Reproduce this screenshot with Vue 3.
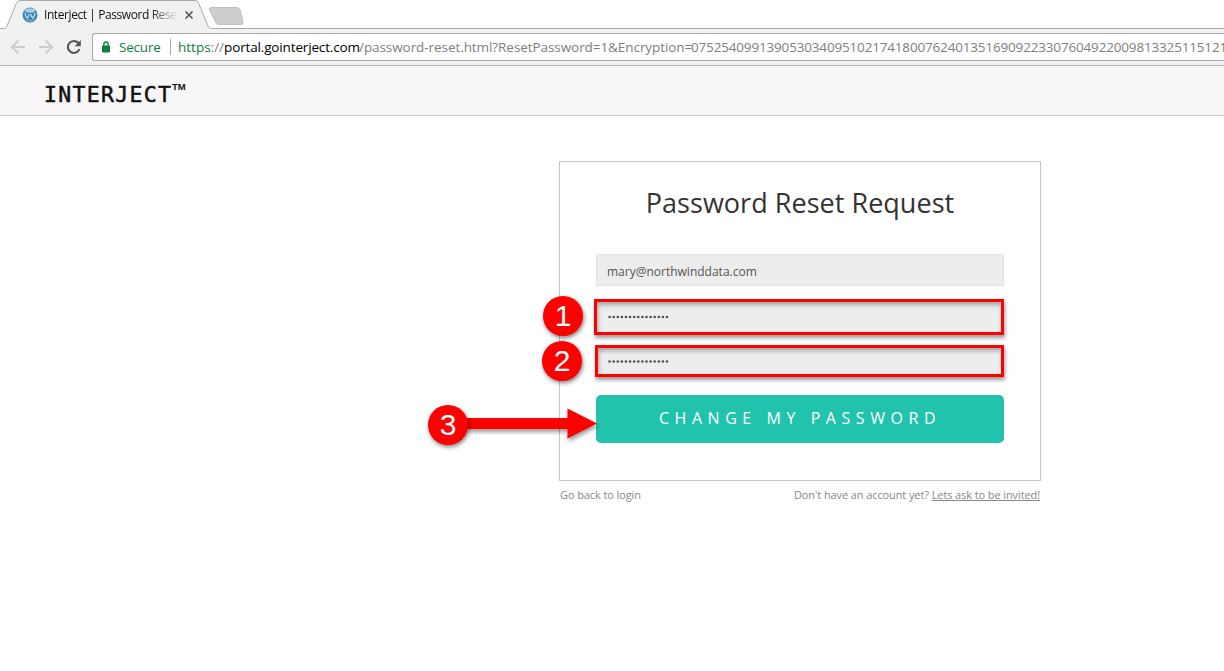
<script setup>
const dots = Array.from({ length: 15 }, (_, i) => i)
</script>

<template>
  <div class="page">
    <header class="browser">
      <svg class="tabs" width="1224" height="29" viewBox="0 0 1224 29">
        <rect width="1224" height="28" fill="#fff" />
        <path d="M0 28.5H4Q6 28.5 7 26L16.500 3Q17.500 .500 20 .500H195Q197.500 .500 198.500 3L208 26Q209 28.500 211.500 28.500H1224" fill="#f2f1f2" stroke="#aaa" />
        <path d="M211 7.500H237Q239 7.500 240 9.500L243 22Q243.500 24.500 241 24.500H219Q216.500 24.500 215.500 22L209.500 10Q208.500 7.500 211 7.500Z" fill="#cdcdcd" stroke="#c0c0c0" />
        <circle cx="30" cy="15" r="7.500" fill="#3b85b8" />
        <ellipse cx="30" cy="10.500" rx="5" ry="2.300" fill="#a7cce4" />
        <path d="M25 13Q25.300 16.500 27.200 18Q28.700 17 29.300 14M30.700 14Q31.300 17 32.800 18Q34.700 16.500 35 13" fill="none" stroke="#d5eaf7" stroke-width="1.200" />
        <path d="M25.500 19.500Q30 22 34.500 19.500" fill="none" stroke="#85b5d5" />
        <path d="M185.500 11.500L192.500 18.500M192.500 11.500L185.500 18.500" stroke="#555" stroke-width="1.700" />
      </svg>
      <span class="tab-title">Interject | Password Rese</span>
      <div class="toolbar">
        <svg class="nav" width="92" height="36" viewBox="0 29 92 36">
          <g fill="none" stroke="#cbcbcb" stroke-width="1.800">
            <path d="M25 47H12.500M18.500 40.500L12 47L18.500 53.500" />
            <path d="M39 47H51.500M45.500 40.500L52 47L45.500 53.500" />
          </g>
          <path d="M78.400 43A6 6 0 1 0 79.500 49" fill="none" stroke="#555" stroke-width="2.100" />
          <path d="M80.800 40V46.200H74.600Z" fill="#555" />
        </svg>
        <div class="address">
          <svg class="lock" width="10" height="12" viewBox="0 0 10 12">
            <rect x="1" y="4.500" width="8" height="7" rx=".8" fill="#0b8043" />
            <path d="M2.800 5V3.200A2.200 2.200 0 0 1 7.200 3.200V5" fill="none" stroke="#0b8043" stroke-width="1.300" />
          </svg>
          <span class="secure">Secure</span>
          <i class="divider"></i>
          <span class="url"><span class="host"><span class="scheme">https</span><span class="slashes">://</span>portal.gointerject.com</span><span class="path">/password-reset.html?ResetPassword=1&amp;Encryption=</span><span class="token">07525409913905303409510217418007624013516909223307604922009813325115121</span></span>
        </div>
      </div>
    </header>

    <div class="brand-bar"><span class="brand">INTERJECT</span><span class="tm">TM</span></div>

    <main class="content">
      <section class="card">
        <h1>Password Reset Request</h1>
        <div class="field">mary@northwinddata.com</div>
        <div class="field marked first">
          <svg class="dots" width="64" height="6"><circle v-for="i in dots" :key="i" :cx="2.6 + i * 4.1" cy="3" r="1.350" fill="#555" /></svg>
        </div>
        <div class="field marked second">
          <svg class="dots" width="64" height="6"><circle v-for="i in dots" :key="i" :cx="2.6 + i * 4.1" cy="3.5" r="1.350" fill="#555" /></svg>
        </div>
        <button class="submit">CHANGE MY PASSWORD</button>
      </section>
      <footer class="links">
        <span class="back">Go back to login</span>
        <span class="invite">Don't have an account yet? <u>Lets ask to be invited!</u></span>
      </footer>
    </main>

    <svg class="arrow" width="140" height="44" viewBox="460 402 140 44">
      <path d="M465 418H567.500V408.500L597 423.500L567.500 438.500V429H465Z" fill="#f00" />
    </svg>
    <span class="badge one">1</span>
    <span class="badge two">2</span>
    <span class="badge three">3</span>
  </div>
</template>

<style>
html, body { margin: 0; background: #fff; overflow: hidden; }
</style>

<style scoped>
* { box-sizing: border-box; }
.page { position: relative; width: 1224px; height: 671px; overflow: hidden; background: #fff; font-family: "Open Sans", "Noto Sans", sans-serif; }
.browser { position: relative; height: 66px; background: #f2f1f2; border-bottom: 1px solid #b4b4b4; }
.tabs { display: block; }
.tab-title { position: absolute; left: 44px; top: 7px; width: 132px; height: 18px; white-space: nowrap; font: 12px/16px "Open Sans", sans-serif; letter-spacing: -.42px; color: #111; -webkit-mask-image: linear-gradient(90deg, #000 106px, transparent 134px); mask-image: linear-gradient(90deg, #000 106px, transparent 134px); }
.toolbar { display: flex; height: 36px; }
.nav { flex: none; }
.address { flex: 1; min-width: 0; display: flex; align-items: center; height: 28px; margin-top: 4px; padding-left: 8px; border: 1px solid #a9a9a9; border-right: 0; border-radius: 3px 0 0 3px; background: #fff; overflow: hidden; }
.lock { flex: none; }
.secure { flex: none; width: 51px; margin-left: 8px; font-size: 13.500px; letter-spacing: -.2px; line-height: 20px; color: #0b8043; white-space: nowrap; }
.divider { flex: none; width: 1px; height: 16px; background: #aaa; }
.url { flex: none; display: flex; margin-left: 7px; font-size: 13.500px; line-height: 20px; white-space: nowrap; color: #808080; }
.host { flex: none; width: 181px; letter-spacing: -.150px; color: #000; }
.scheme { color: #0b8043; letter-spacing: 0; }
.slashes { color: #808080; letter-spacing: 0; }
.path { flex: none; width: 332px; letter-spacing: -.070px; }
.token { letter-spacing: -.17px; }
.brand-bar { display: flex; align-items: flex-start; height: 50px; padding-left: 44px; background: #f8f6f7; border-bottom: 1px solid #ccc; color: #111; }
.brand { width: 128px; margin-top: 16px; font: 21.500px/25px "DejaVu Sans Mono", monospace; letter-spacing: 1.300px; -webkit-text-stroke: .5px #111; }
.tm { margin-top: 15px; font: bold 9.500px/12px "Liberation Sans", sans-serif; }
.content { width: 482px; margin: 45px 0 0 559px; }
.card { height: 320px; padding: 0 36px; border: 1px solid #c6c6c6; background: #fff; }
h1 { margin: 21px 0 31px; height: 40px; font-size: 27px; line-height: 40px; font-weight: 400; letter-spacing: .03px; color: #333; text-align: center; white-space: nowrap; }
.field { height: 32px; padding-left: 10px; border: 1px solid #e2e2e2; background: #ededed; font-size: 12px; line-height: 34px; color: #555; }
.marked { width: 410px; margin-left: -2px; padding-left: 10px; display: flex; align-items: center; border: 3px solid #f00; box-shadow: 1px 3px 4px rgba(0,0,0,.4), inset 1px 3px 4px rgba(0,0,0,.3); }
.first { height: 36px; margin-top: 13px; }
.second { width: 409px; height: 32px; margin: 10px 0 0 -1px; padding-left: 9px; }
.dots { display: block; }
.submit { display: block; width: 408px; height: 48px; margin-top: 18px; padding: 0 0 2px; border: 0; border-radius: 5px; background: #22c3ad; color: #fff; font: 16px/24px "Open Sans", sans-serif; letter-spacing: 5.550px; white-space: nowrap; }
.links { display: flex; justify-content: space-between; padding: 6px 1px 0; font-size: 11px; line-height: 16px; letter-spacing: -.1px; color: #888; }
.arrow { position: absolute; left: 460px; top: 402px; overflow: visible; filter: drop-shadow(1px 3px 2px rgba(0,0,0,.4)); }
.badge { position: absolute; width: 40px; height: 40px; border-radius: 50%; background: #f00; box-shadow: 1px 2px 4px rgba(0,0,0,.5); color: #fff; font: 30px/39px "Liberation Sans", Arial, sans-serif; text-align: center; }
.one { left: 543px; top: 296px; }
.two { left: 542px; top: 341px; }
.three { left: 428px; top: 405px; }
</style>
